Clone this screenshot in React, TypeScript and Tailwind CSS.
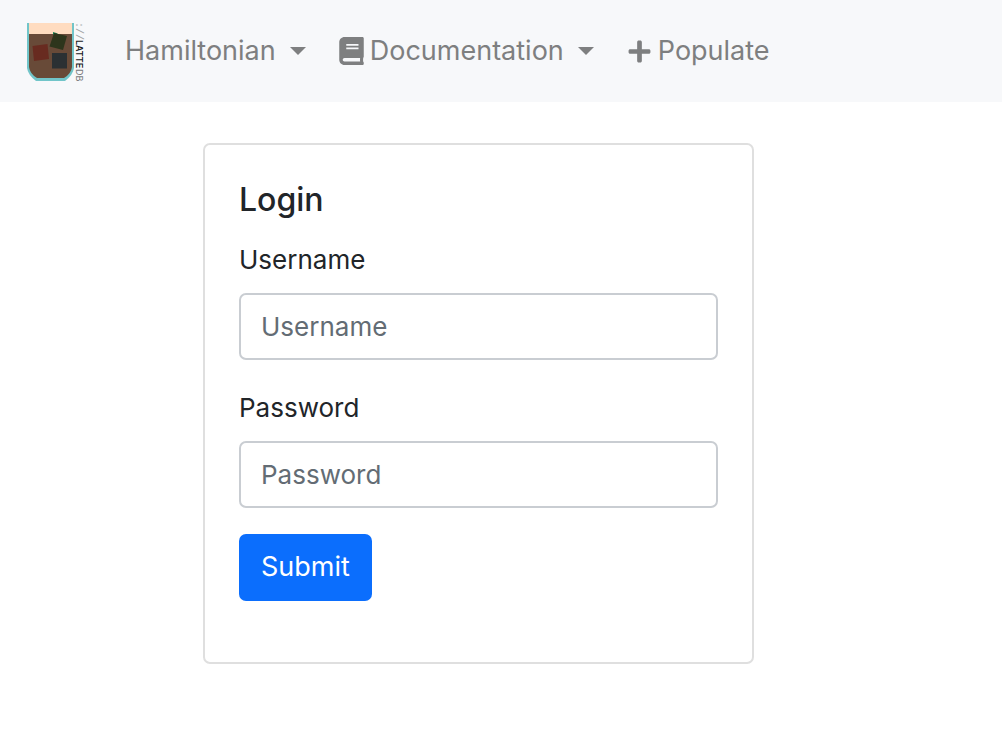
import { FaBook, FaPlus } from 'react-icons/fa';

function Logo() {
  return (
    <svg width="60" height="62" viewBox="0 -2 60 62" role="img" aria-label="LatteDB">
      <path d="M0 1H47V46Q46 53 38 59H9Q1 53 0 46Z" fill="#71c5c9" />
      <path d="M2 1H45V12H2Z" fill="#ffdcc0" />
      <path d="M2 12H45V45Q44 52 37 56H10Q3 52 2 45Z" fill="#684a38" />
      <path d="M26 10L31 11.500L26 13Z" fill="#168456" />
      <path d="M27 11L40 14L36 28L22.500 24.500Z" fill="#2d351c" />
      <path d="M5.500 24L20.500 22L22 37L7 39Z" fill="#682b20" />
      <path d="M25 31H40V46.500H25Z" fill="#2b3033" />
      <g transform="translate(49 0) rotate(90)" fontFamily="Inter, sans-serif" fontSize="9">
        <text x="0" y="0" fill="#a2a4a6" fontFamily="Liberation Mono, monospace" fontSize="10">://</text>
        <text x="18" y="0" fill="#17191b" fontWeight="600">LATTE</text>
        <text x="47" y="0" fill="#77797b">DB</text>
      </g>
    </svg>
  );
}

function Caret() {
  return (
    <svg width="16" height="8" viewBox="0 0 16 8" aria-hidden="true">
      <path d="M0 0H16L8 8Z" fill="currentColor" />
    </svg>
  );
}

function Field({ id, label, type }: { id: string; label: string; type: string }) {
  return (
    <div className="flex flex-col gap-[13px]">
      <label htmlFor={id} className="leading-10">{label}</label>
      <input
        id={id}
        type={type}
        placeholder={label}
        className="h-[67px] w-full rounded-[7px] border-2 border-[#c9cdd2] bg-white px-5 placeholder:text-[#636c74] focus:border-[#86b7fe] focus:outline-none"
      />
    </div>
  );
}

export default function App() {
  return (
    <div className="min-h-screen bg-white font-['Inter',sans-serif] text-[26px] text-[#212529]">
      <nav className="flex h-[102px] items-center bg-[#f7f8fa] pl-[27px] text-[27px] text-[#7e7f80]">
        <a href="#home" className="mr-[38px] shrink-0"><Logo /></a>
        <div className="flex items-center gap-[33px]">
          <button type="button" className="flex items-center gap-[14px]">
            Hamiltonian
            <Caret />
          </button>
          <button type="button" className="flex items-center gap-[14px]">
            <span className="flex items-center gap-[6px]">
              <FaBook className="h-7 w-[25px]" />
              Documentation
            </span>
            <Caret />
          </button>
          <a href="#populate" className="flex items-center gap-[6px]">
            <FaPlus className="size-[25px]" />
            Populate
          </a>
        </div>
      </nav>
      <main className="pt-[41px] pr-[248px] pb-10 pl-[203px]">
        <form className="rounded-[7px] border-2 border-[#dfdfdf] px-[34px] pt-[35px] pb-[61px]" onSubmit={(e) => e.preventDefault()}>
          <h1 className="mb-5 text-[32px] leading-10 font-medium text-[#212529]">Login</h1>
          <div className="mb-[26px] flex flex-col gap-7">
            <Field id="username" label="Username" type="text" />
            <Field id="password" label="Password" type="password" />
          </div>
          <button type="submit" className="h-[67px] rounded-[7px] bg-[#0b6efd] px-[22px] text-[27px] text-white">
            Submit
          </button>
        </form>
      </main>
    </div>
  );
}
